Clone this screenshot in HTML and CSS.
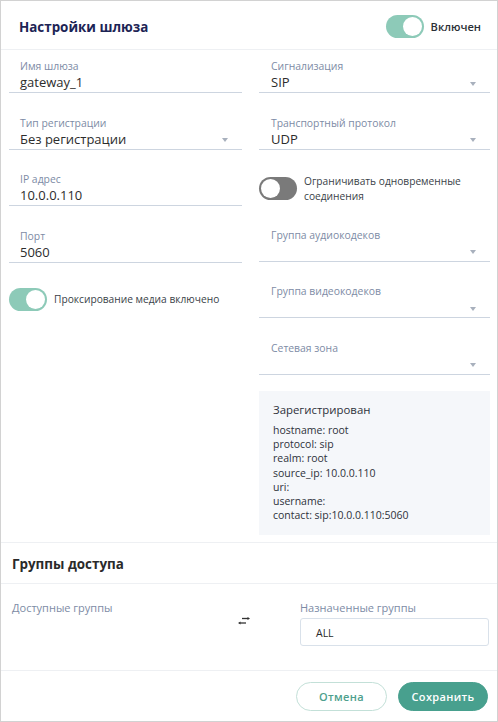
FILE: index.html
```html
<!DOCTYPE html>
<html lang="ru">
<head>
<meta charset="utf-8">
<link rel="stylesheet" href="styles.css">
</head>
<body>
<div class="dialog">
  <div class="header">
    <h1 class="title">Настройки шлюза</h1>
    <div class="switch-row">
      <span class="toggle on"><span class="knob"></span></span>
      <span class="switch-text bold">Включен</span>
    </div>
  </div>

  <div class="form">
    <div class="col col-left">
      <div class="field">
        <div class="field-label">Имя шлюза</div>
        <div class="field-input"><span class="field-value">gateway_1</span></div>
      </div>
      <div class="field">
        <div class="field-label">Тип регистрации</div>
        <div class="field-input"><span class="field-value">Без регистрации</span><span class="caret"></span></div>
      </div>
      <div class="field">
        <div class="field-label">IP адрес</div>
        <div class="field-input"><span class="field-value">10.0.0.110</span></div>
      </div>
      <div class="field">
        <div class="field-label">Порт</div>
        <div class="field-input"><span class="field-value">5060</span></div>
      </div>
      <div class="switch-row proxy">
        <span class="toggle on"><span class="knob"></span></span>
        <span class="switch-text">Проксирование медиа включено</span>
      </div>
    </div>

    <div class="col col-right">
      <div class="field">
        <div class="field-label">Сигнализация</div>
        <div class="field-input"><span class="field-value">SIP</span><span class="caret"></span></div>
      </div>
      <div class="field">
        <div class="field-label">Транспортный протокол</div>
        <div class="field-input"><span class="field-value">UDP</span><span class="caret"></span></div>
      </div>
      <div class="switch-row limit">
        <span class="toggle off"><span class="knob"></span></span>
        <span class="switch-text">Ограничивать одновременные<br>соединения</span>
      </div>
      <div class="field">
        <div class="field-label">Группа аудиокодеков</div>
        <div class="field-input"><span class="caret"></span></div>
      </div>
      <div class="field">
        <div class="field-label">Группа видеокодеков</div>
        <div class="field-input"><span class="caret"></span></div>
      </div>
      <div class="field">
        <div class="field-label">Сетевая зона</div>
        <div class="field-input"><span class="caret"></span></div>
      </div>
      <div class="reg-box">
        <div class="reg-title">Зарегистрирован</div>
        <div class="reg-lines">
          <div>hostname: root</div>
          <div>protocol: sip</div>
          <div>realm: root</div>
          <div>source_ip: 10.0.0.110</div>
          <div>uri:</div>
          <div>username:</div>
          <div>contact: sip:10.0.0.110:5060</div>
        </div>
      </div>
    </div>
  </div>

  <div class="section-head">Группы доступа</div>

  <div class="access">
    <div class="access-col">
      <div class="access-label">Доступные группы</div>
    </div>
    <div class="swap">
      <svg width="12" height="8" viewBox="0 0 12 8" aria-hidden="true">
        <path d="M4 1.5 H10.5" stroke="#333" stroke-width="1.3" fill="none"/>
        <path d="M9.5 0 L12 1.5 L9.5 3 Z" fill="#333"/>
        <path d="M1.5 6 H8" stroke="#333" stroke-width="1.3" fill="none"/>
        <path d="M2.5 4.5 L0 6 L2.5 7.5 Z" fill="#333"/>
      </svg>
    </div>
    <div class="access-col">
      <div class="access-label">Назначенные группы</div>
      <div class="group-box">ALL</div>
    </div>
  </div>

  <div class="footer">
    <button class="btn btn-cancel">Отмена</button>
    <button class="btn btn-save">Сохранить</button>
  </div>
</div>
</body>
</html>
```

FILE: styles.css
```css
* { box-sizing: border-box; }

html, body {
  margin: 0;
  padding: 0;
  background: #fff;
}

body {
  font-family: "Open Sans", "Noto Sans", sans-serif;
  color: #333;
}

.dialog {
  width: 498px;
  height: 722px;
  border: 1px solid #d2d2d2;
  display: flex;
  flex-direction: column;
  overflow: hidden;
}

/* header */
.header {
  height: 49px;
  flex: none;
  display: flex;
  align-items: center;
  justify-content: space-between;
  padding: 3px 16px 0 18px;
  border-bottom: 1px solid #eef0f3;
}

.title {
  margin: 0;
  font-size: 13.4px;
  font-weight: 700;
  color: #1c2455;
  line-height: 20px;
}

/* toggle */
.switch-row {
  display: flex;
  align-items: center;
  gap: 7px;
}

.toggle {
  width: 38px;
  height: 23px;
  border-radius: 12px;
  display: flex;
  align-items: center;
  padding: 0 2px;
  flex: none;
}

.toggle.on {
  background: #8dcab8;
  justify-content: flex-end;
}

.toggle.off {
  background: #7a7a7a;
  justify-content: flex-start;
}

.knob {
  width: 19px;
  height: 19px;
  border-radius: 50%;
  background: #fff;
}

.switch-text {
  font-size: 10.2px;
  line-height: 15px;
  color: #3a3f48;
}

.switch-text.bold {
  font-size: 11.1px;
  font-weight: 600;
  color: #2b2f36;
}

/* form */
.form {
  flex: none;
  display: grid;
  grid-template-columns: 233px 231px;
  column-gap: 17px;
  padding: 9px 7px 7px 8px;
  align-items: start;
}

.col {
  display: flex;
  flex-direction: column;
}

.col > * + * {
  margin-top: 22.6px;
}

.field-label {
  font-size: 10.4px;
  line-height: 15px;
  color: #7d8ba5;
  padding-left: 11px;
}

.col-right .field-label {
  padding-left: 12px;
}

.field-input {
  height: 19px;
  display: flex;
  align-items: center;
  border-bottom: 1px solid #cdd5e0;
  padding: 0 14px 1px 11px;
}

.col-right .field-input {
  padding-left: 12px;
}

.field-value {
  font-size: 13px;
  line-height: 17px;
  color: #2c2c2c;
}

.caret {
  margin-left: auto;
  width: 0;
  height: 0;
  border-left: 3.5px solid transparent;
  border-right: 3.5px solid transparent;
  border-top: 4px solid #a8b0bd;
  margin-top: 2px;
}

.switch-row.proxy {
  margin-top: 25px;
}

.switch-row.limit {
  min-height: 33px;
  align-items: center;
}

.col > .reg-box {
  margin-top: 16px;
}

.reg-box {
  background: #f5f7fa;
  padding: 11px 10px 13px 14px;
  height: 144px;
}

.reg-title {
  font-size: 11.4px;
  line-height: 16px;
  color: #2e323a;
}

.reg-lines {
  margin-top: 5px;
  font-size: 10.5px;
  line-height: 14.2px;
  color: #2e323a;
}

/* access groups */
.section-head {
  flex: none;
  height: 42px;
  border-top: 1px solid #eef0f3;
  border-bottom: 1px solid #eef0f3;
  display: flex;
  align-items: center;
  padding: 3px 0 0 11px;
  font-size: 13.4px;
  font-weight: 700;
  color: #2a2a2a;
}

.access {
  flex: none;
  height: 87px;
  display: grid;
  grid-template-columns: 1fr 12px 189px;
  column-gap: 50px;
  padding: 16px 8px 0 11px;
  border-bottom: 1px solid #eef0f3;
  align-items: start;
}

.access-label {
  font-size: 11px;
  line-height: 15px;
  color: #7d8ba5;
}

.swap {
  margin-top: 17px;
  height: 8px;
  display: flex;
}

.group-box {
  margin-top: 3px;
  height: 28px;
  border: 1px solid #d9e1ea;
  border-radius: 3px;
  display: flex;
  align-items: center;
  padding: 2px 0 0 15px;
  font-size: 10.5px;
  color: #2a2a2a;
}

/* footer */
.footer {
  flex: 1;
  display: flex;
  justify-content: flex-end;
  align-items: flex-start;
  gap: 11px;
  padding: 11px 9px 0 0;
}

.btn {
  height: 29px;
  border-radius: 15px;
  font-family: "Open Sans", "Noto Sans", sans-serif;
  font-size: 11px;
  font-weight: 600;
  letter-spacing: 0.35px;
  cursor: pointer;
  padding: 0;
}

.btn-cancel {
  width: 91px;
  background: #fff;
  border: 1px solid #c3e0d8;
  color: #4e9f8d;
}

.btn-save {
  width: 90px;
  background: #48a08e;
  border: 1px solid #48a08e;
  color: #fff;
}
```
